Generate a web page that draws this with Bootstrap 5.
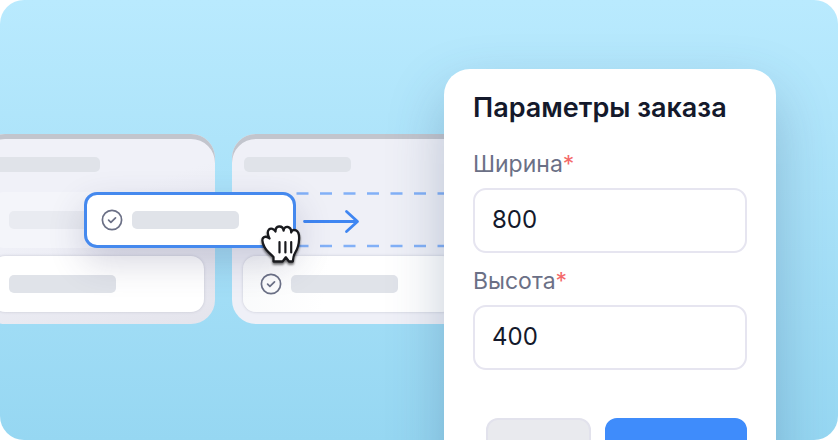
<!DOCTYPE html>
<html lang="ru">
<head>
<meta charset="utf-8">
<meta name="viewport" content="width=device-width, initial-scale=1">
<title>Параметры заказа</title>
<link rel="stylesheet" href="https://cdn.jsdelivr.net/npm/bootstrap@5.3.0/dist/css/bootstrap.min.css">
<style>
  body { background: #fff; font-family: Inter, "Liberation Sans", sans-serif; color: #14192b; }
  .scene { border-radius: 24px; background: linear-gradient(#b9eafe, #96d7f2); }
  .board { gap: 17px; padding-top: 134px; margin-left: -19px; min-width: 0; }
  .lane { flex: 0 0 234px; padding: 23px 11px 12px; border-radius: 24px; background: #eff0f7; box-shadow: inset 0 5px #c2c5cd; }
  .lane-dim { background: linear-gradient(160deg, #f0f1f8 40%, #e4e4ec); }
  .bone { width: 107px; height: 18px; border-radius: 5px; background: #e0e3e9; }
  .bone-title { height: 15px; margin: 0 1px 20px; }
  .bone-faint { background: #e9ebf1; }
  .slot { height: 56px; margin-bottom: 8px; }
  .slot-left { background: #f4f5fa; border-radius: 12px; padding: 0 17px; }
  .task { height: 56px; padding: 0 17px; gap: 9px; border-radius: 13px; background: #fff; box-shadow: 0 0 3px #c4c6d2; }
  .lane > .task:last-child { background: linear-gradient(100deg, #f9fafb, #fff 40%); }
  .lane-dim > .task:last-child { background: #fff; }
  .task svg { flex: none; }
  .task-drag { left: 92px; top: 0; width: 212px; padding: 0 14px; border: 3px solid #4589ee; box-shadow: 0 14px 36px rgba(50, 50, 100, .2); z-index: 2; }
  .grab { right: -10px; top: 28px; filter: drop-shadow(0 2px 1px rgba(0, 0, 0, .55)); }
  .order { flex: 0 0 332px; margin: 69px 62px 0 0; padding: 22px 29px 24px; border-radius: 26px; background: #fff; box-shadow: 0 24px 56px rgba(50, 80, 120, .28); z-index: 3; }
  .order h1 { font-size: 27px; line-height: 34px; font-weight: 600; margin-bottom: 22px; }
  .order .form-label { display: block; font-size: 23px; line-height: 34px; color: #6b7086; margin-bottom: 7px; }
  .order .form-label span { color: #f4696a; }
  .order .form-control { height: 65px; padding: 0 17px 3px; border: 2px solid #e6e5f0; border-radius: 13px; font-size: 24px; color: #14192b; }
  .field { margin-bottom: 11px; }
  .actions { margin-top: 48px; padding-left: 13px; gap: 14px; }
  .actions .btn { height: 56px; padding: 0; border-radius: 12px; border: 2px solid #e2e2ec; background: #e9eaee; flex: 105 1 0; }
  .actions .btn-go { background: #3f8cfb; border-color: #3f8cfb; flex-grow: 143; }
</style>
<script src="https://cdn.jsdelivr.net/npm/bootstrap@5.3.0/dist/js/bootstrap.bundle.min.js"></script>
</head>
<body>
<main class="scene d-flex vh-100 overflow-hidden">
  <section class="board d-flex align-items-start flex-grow-1 overflow-hidden" aria-label="Доска">
    <div class="lane lane-dim">
      <div class="bone bone-title"></div>
      <div class="slot slot-left position-relative d-flex align-items-center">
        <div class="bone bone-faint"></div>
        <div class="task task-drag position-absolute d-flex align-items-center">
          <svg width="22" height="22" viewBox="0 0 22 22" fill="none" stroke="#6b7086" stroke-linecap="round" stroke-linejoin="round"><circle cx="11" cy="11" r="9.6" stroke-width="1.7"/><path d="M7.6 11.2l2.3 2.2 4.6-4.6" stroke-width="1.7"/></svg>
          <div class="bone"></div>
          <svg class="grab position-absolute" width="44" height="44" viewBox="0 0 44 44"><path d="M14.5 38.5V34C11 30.5 7.5 28 5.5 24C3.5 20 2.6 17 4 15C5.5 13 8.500 13.5 10.5 15.5C8.5 11.5 8 8.5 10 6.5C12 4.800 15 6 16.5 8.5C16.5 5.5 17.5 3.7 20 3.5C22.4 3.3 24.2 5 24.6 7.5C25 4.9 26.5 3.6 28.8 4C31.2 4.4 32.3 6.3 32.2 9.5C33 7 35 6.5 37 7.4C40 8.8 40.3 12 40.1 16C39.9 21 39 25 36.5 29C35 31.5 34 34 33.8 38.5H30L26.8 34.3L23.6 38.5Z" fill="#fff" stroke="#191a1e" stroke-width="2.3" stroke-linejoin="round"/><path d="M20.5 19V29.500M26.400 19V29.500M32.200 19V29.500" stroke="#191a1e" stroke-width="2.2" stroke-linecap="round"/></svg>
        </div>
      </div>
      <div class="task d-flex align-items-center"><div class="bone"></div></div>
    </div>
    <div class="lane">
      <div class="bone bone-title"></div>
      <div class="slot">
        <svg class="d-block" width="212" height="56" viewBox="0 0 212 56" fill="none"><path d="M53.5 1.5H212M53.5 54H212" stroke="#82b0f7" stroke-width="2.6" stroke-dasharray="12 11.5"/><path d="M61.5 29.500H114M103.500 19.500L114.500 29.500L103.500 39.500" stroke="#3f86f2" stroke-width="2.800" stroke-linecap="round" stroke-linejoin="round"/></svg>
      </div>
      <div class="task d-flex align-items-center">
        <svg width="22" height="22" viewBox="0 0 22 22" fill="none" stroke="#6b7086" stroke-linecap="round" stroke-linejoin="round"><circle cx="11" cy="11" r="9.6" stroke-width="1.7"/><path d="M7.6 11.2l2.3 2.2 4.6-4.6" stroke-width="1.7"/></svg>
        <div class="bone"></div>
      </div>
    </div>
  </section>
  <form class="order position-relative align-self-start">
    <h1>Параметры заказа</h1>
    <div class="field">
      <label class="form-label" for="w">Ширина<span>*</span></label>
      <input class="form-control" id="w" type="text" inputmode="numeric" value="800">
    </div>
    <div class="field">
      <label class="form-label" for="h">Высота<span>*</span></label>
      <input class="form-control" id="h" type="text" inputmode="numeric" value="400">
    </div>
    <div class="actions d-flex">
      <button class="btn" type="button" aria-label="Отмена"></button>
      <button class="btn btn-go" type="submit" aria-label="Сохранить"></button>
    </div>
  </form>
</main>
</body>
</html>
